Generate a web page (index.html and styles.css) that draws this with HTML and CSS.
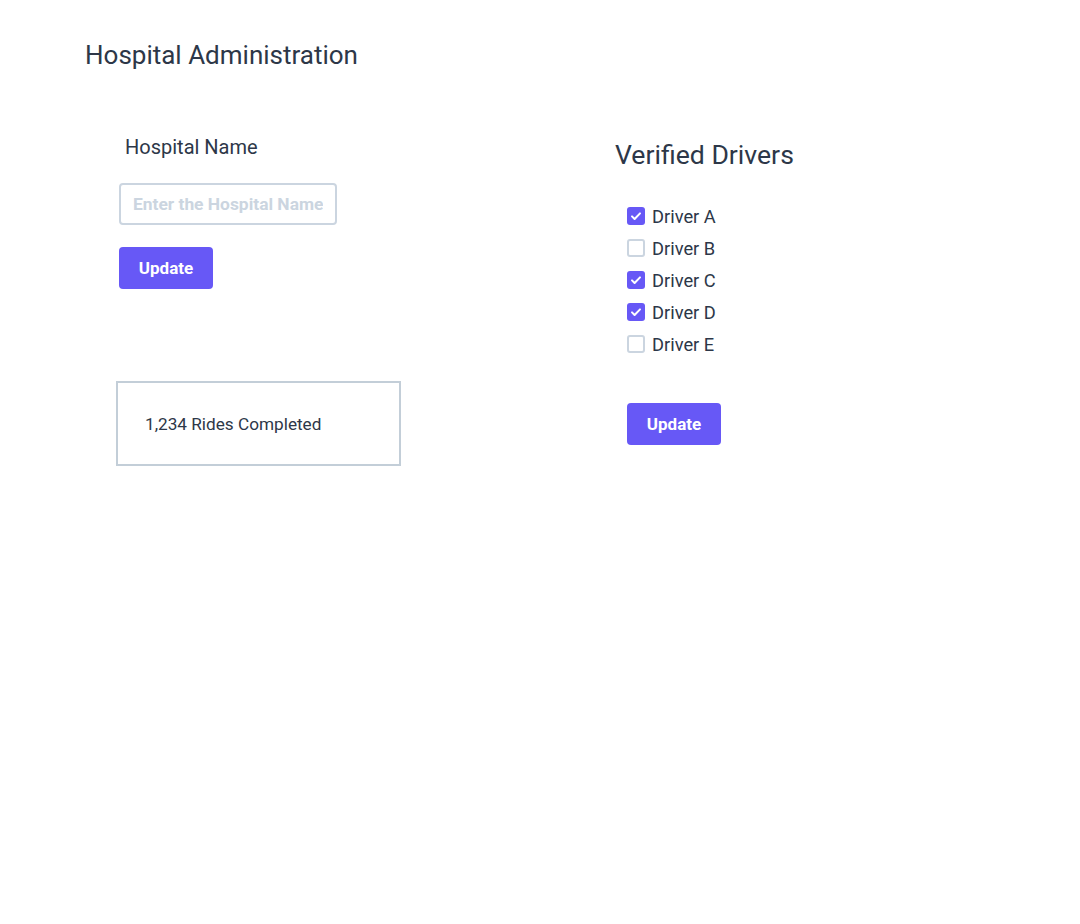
FILE: index.html
```html
<!DOCTYPE html>
<html>
<head>
<meta charset="utf-8">
<link rel="stylesheet" href="styles.css">
</head>
<body>
<div class="page">
  <h1 class="title">Hospital Administration</h1>
  <div class="columns">
    <div class="col-left">
      <label class="field-label">Hospital Name</label>
      <input class="text-input" type="text" placeholder="Enter the Hospital Name">
      <button class="btn">Update</button>
      <div class="stat-box">1,234 Rides Completed</div>
    </div>
    <div class="col-right">
      <h2 class="section-title">Verified Drivers</h2>
      <ul class="driver-list">
        <li class="driver"><span class="check on"><svg viewBox="0 0 18 18"><path d="M5 9.4l2.6 2.6L13 6.4" fill="none" stroke="#fff" stroke-width="2" stroke-linecap="round" stroke-linejoin="round"/></svg></span>Driver A</li>
        <li class="driver"><span class="check"></span>Driver B</li>
        <li class="driver"><span class="check on"><svg viewBox="0 0 18 18"><path d="M5 9.4l2.6 2.6L13 6.4" fill="none" stroke="#fff" stroke-width="2" stroke-linecap="round" stroke-linejoin="round"/></svg></span>Driver C</li>
        <li class="driver"><span class="check on"><svg viewBox="0 0 18 18"><path d="M5 9.4l2.6 2.6L13 6.4" fill="none" stroke="#fff" stroke-width="2" stroke-linecap="round" stroke-linejoin="round"/></svg></span>Driver D</li>
        <li class="driver"><span class="check"></span>Driver E</li>
      </ul>
      <button class="btn">Update</button>
    </div>
  </div>
</div>
</body>
</html>
```

FILE: styles.css
```css
html, body {
  margin: 0;
  padding: 0;
  background: #ffffff;
}
body {
  font-family: Roboto, "Noto Sans", sans-serif;
  color: #2d3748;
}
.page {
  padding: 38px 0 0 85px;
}
.title {
  margin: 0;
  font-size: 26px;
  font-weight: 400;
  line-height: 34px;
}
.columns {
  display: flex;
  margin-top: 59px;
}
.col-left {
  width: 530px;
  flex: none;
  padding-left: 34px;
  box-sizing: border-box;
  display: flex;
  flex-direction: column;
  align-items: flex-start;
}
.field-label {
  display: block;
  margin: 2px 0 0 6px;
  font-size: 20px;
  line-height: 28px;
}
.text-input {
  margin-top: 22px;
  width: 218px;
  height: 42px;
  box-sizing: border-box;
  border: 2px solid #cbd5e0;
  border-radius: 4px;
  padding: 0 12px;
  font-family: inherit;
  font-size: 17.4px;
  font-weight: 700;
  color: #2d3748;
  outline: none;
}
.text-input::placeholder {
  color: #cbd5e0;
}
.btn {
  margin-top: 22px;
  width: 94px;
  height: 42px;
  border: none;
  border-radius: 4px;
  background: #6758f6;
  color: #ffffff;
  font-family: inherit;
  font-size: 17px;
  font-weight: 700;
  cursor: pointer;
}
.stat-box {
  margin: 92px 0 0 -3px;
  width: 285px;
  height: 85px;
  box-sizing: border-box;
  border: 2px solid #c3ced8;
  display: flex;
  align-items: center;
  padding-left: 27px;
  font-size: 17.2px;
}
.col-right {
  display: flex;
  flex-direction: column;
  align-items: flex-start;
}
.section-title {
  margin: 0;
  font-size: 26.6px;
  font-weight: 400;
  line-height: 34px;
  padding-top: 7px;
}
.driver-list {
  list-style: none;
  margin: 28px 0 0 12px;
  padding: 0;
}
.driver {
  display: flex;
  align-items: center;
  height: 32px;
  font-size: 18.3px;
}
.check {
  width: 18px;
  height: 18px;
  flex: none;
  box-sizing: border-box;
  border: 2px solid #cbd5e0;
  border-radius: 3px;
  margin-right: 7px;
  display: flex;
}
.check.on {
  border: none;
  background: #6758f6;
}
.check svg {
  width: 18px;
  height: 18px;
}
.col-right .btn {
  margin: 43px 0 0 12px;
}
```
